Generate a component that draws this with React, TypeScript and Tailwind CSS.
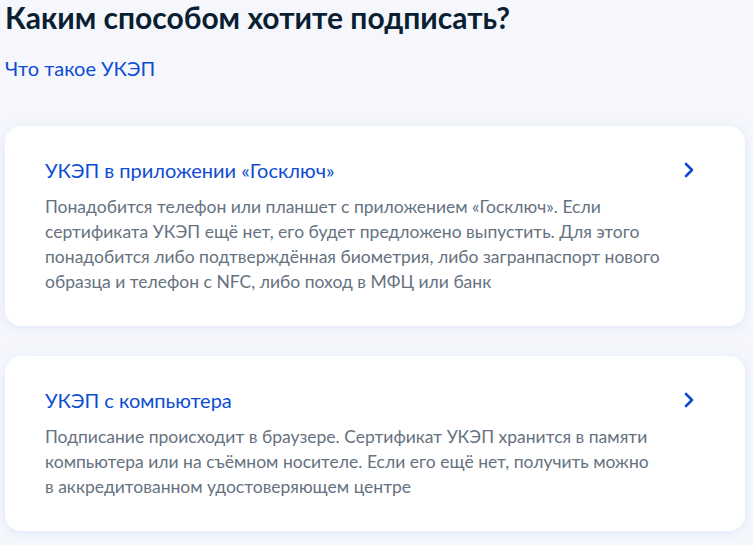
import { ChevronRight } from "lucide-react";

const options = [
  {
    title: "УКЭП в приложении «Госключ»",
    text: "Понадобится телефон или планшет с приложением «Госключ». Если сертификата УКЭП ещё нет, его будет предложено выпустить. Для этого понадобится либо подтверждённая биометрия, либо загранпаспорт нового образца и телефон с NFC, либо поход в МФЦ или банк",
  },
  {
    title: "УКЭП с компьютера",
    text: "Подписание происходит в браузере. Сертификат УКЭП хранится в памяти компьютера или на съёмном носителе. Если его ещё нет, получить можно в аккредитованном удостоверяющем центре",
  },
];

function OptionCard({ title, text }: { title: string; text: string }) {
  return (
    <a
      href="#"
      className="flex items-start rounded-2xl bg-white py-8 pl-10 pr-11 shadow-[0_2px_10px_rgba(205,218,245,0.55)]"
    >
      <div className="min-w-0 flex-1">
        <h3 className="text-[20px] leading-6 text-[#0d4cd3]">{title}</h3>
        <p className="mt-3 text-[17.5px] leading-[25px] text-[#66727f]">
          {text}
        </p>
      </div>
      <ChevronRight
        className="ml-4 h-6 w-6 shrink-0 text-[#0d4cd3]"
        strokeWidth={2.6}
      />
    </a>
  );
}

export default function App() {
  return (
    <div
      className="min-h-svh bg-[#f5f7fc] px-[5px] pt-px text-[#0b1f33]"
      style={{ fontFamily: "Lato, 'Noto Sans', sans-serif" }}
    >
      <h1 className="text-[30px] font-bold leading-8">
        Каким способом хотите подписать?
      </h1>
      <a href="#" className="mt-[23px] block text-[20px] leading-6 text-[#0d4cd3]">
        Что такое УКЭП
      </a>
      <div className="mt-[46px] flex w-[740px] flex-col gap-[30px]">
        {options.map((o) => (
          <OptionCard key={o.title} {...o} />
        ))}
      </div>
    </div>
  );
}
